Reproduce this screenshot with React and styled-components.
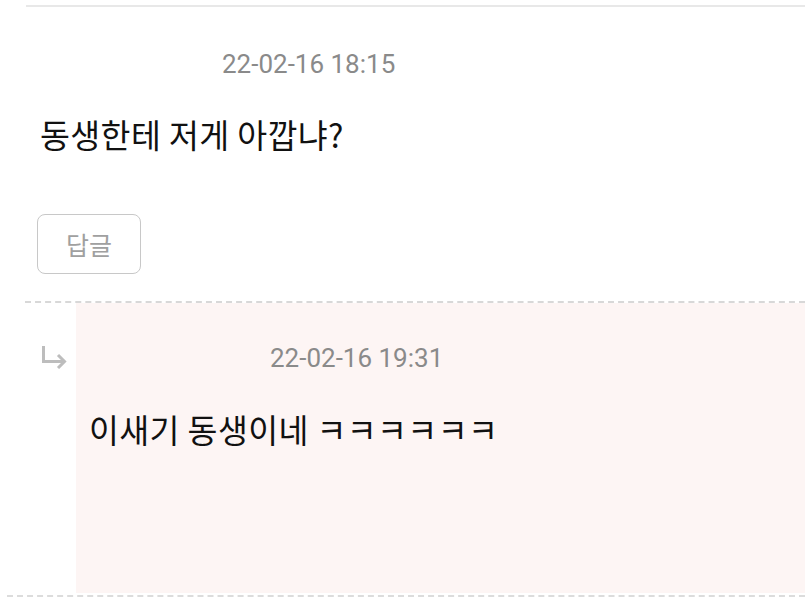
import React from "react";
import styled, { createGlobalStyle } from "styled-components";

const GlobalStyle = createGlobalStyle`
  html, body {
    margin: 0;
    padding: 0;
    background: #fff;
    font-family: Roboto, "Noto Sans CJK KR", sans-serif;
    overflow: hidden;
  }
`;

const Page = styled.div`
  width: 805px;
  height: 597px;
  padding-top: 5px;
  box-sizing: border-box;
`;

const Comment = styled.div`
  margin-left: 26px;
  border-top: 2px solid #e8e8e8;
  padding: 0 0 27px 14px;
`;

const DateText = styled.div`
  font-size: 26px;
  color: #8a8a8a;
  line-height: 28px;
  padding-left: ${({ $indent }) => $indent}px;
  margin: ${({ $margin }) => $margin};
`;

const Body = styled.div`
  font-family: "Noto Sans CJK KR", sans-serif;
  font-size: 32.5px;
  color: #111;
  line-height: 40px;
  letter-spacing: 0.4px;
  margin: ${({ $margin }) => $margin};
`;

const ButtonRow = styled.div`
  margin-top: 60px;
`;

const ReplyButton = styled.button`
  width: 104px;
  height: 60px;
  border: 1.5px solid #c8c8c8;
  border-radius: 8px;
  background: #fff;
  color: #a0a0a0;
  font-family: "Noto Sans CJK KR", sans-serif;
  font-size: 25px;
  margin-left: -3px;
`;

const ReplyRow = styled.div`
  margin-left: 25px;
  border-top: 2px dashed #d8d8d8;
  display: flex;
  height: 290px;
`;

const ArrowCell = styled.div`
  width: 51px;
  padding: 42px 0 0 16px;
  box-sizing: border-box;
`;

const ReplyBox = styled.div`
  flex: 1;
  background: #fdf5f4;
  padding-left: 13px;
`;

const BottomLine = styled.div`
  margin: 2px 0 0 7px;
  border-top: 2px dashed #dcdcdc;
`;

const Arrow = () => (
  <svg width="28" height="24" viewBox="0 0 28 24" fill="none" stroke="#bdbdbd" strokeWidth="3">
    <path d="M2.5 1v15.5h21" />
    <path d="M17 10l6.5 6.5-6.5 6.5" />
  </svg>
);

export default function App() {
  return (
    <Page>
      <GlobalStyle />
      <Comment>
        <DateText $indent={182} $margin="43px 0 0">22-02-16 18:15</DateText>
        <Body $margin="36px 0 0">동생한테 저게 아깝냐?</Body>
        <ButtonRow>
          <ReplyButton>답글</ReplyButton>
        </ButtonRow>
      </Comment>
      <ReplyRow>
        <ArrowCell>
          <Arrow />
        </ArrowCell>
        <ReplyBox>
          <DateText $indent={181} $margin="41px 0 0">22-02-16 19:31</DateText>
          <Body $margin="37px 0 0">이새기 동생이네 ㅋㅋㅋㅋㅋㅋ</Body>
        </ReplyBox>
      </ReplyRow>
      <BottomLine />
    </Page>
  );
}
